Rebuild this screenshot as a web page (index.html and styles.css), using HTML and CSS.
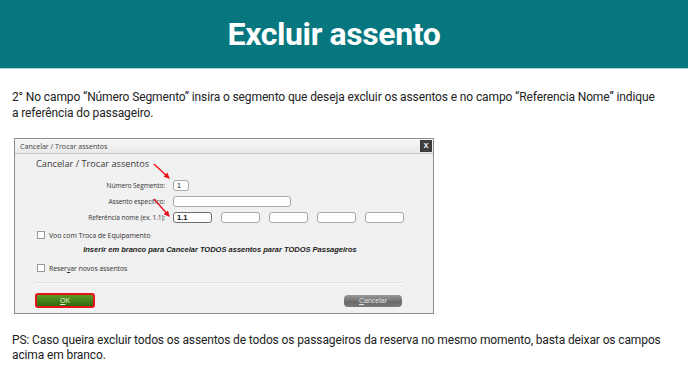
FILE: index.html
```html
<!DOCTYPE html>
<html lang="pt">
<head>
    <meta charset="UTF-8">
    <title>Excluir assento</title>
    <link rel="stylesheet" href="styles.css">
</head>
<body>
    <header class="banner">
        <h1>Excluir assento</h1>
    </header>

    <p class="text intro">2° No campo “Número Segmento” insira o segmento que deseja excluir os assentos e no campo “Referencia Nome” indique a referência do passageiro.</p>

    <div class="dialog">
        <div class="titlebar">
            <span>Cancelar / Trocar assentos</span>
            <span class="close">x</span>
        </div>
        <div class="dlg-body">
            <h2>Cancelar / Trocar assentos</h2>

            <div class="row first">
                <label>Número Segmento:</label>
                <span class="field seg">1</span>
            </div>
            <div class="row">
                <label>Assento específico:</label>
                <span class="field seat"></span>
            </div>
            <div class="row">
                <label>Referência nome (ex. 1.1):</label>
                <div class="refs">
                    <span class="field ref active">1.1</span>
                    <span class="field ref"></span>
                    <span class="field ref"></span>
                    <span class="field ref"></span>
                    <span class="field ref"></span>
                </div>
            </div>

            <div class="check first-check"><span class="box"></span>Voo com Troca de Equipamento</div>
            <div class="notice">Inserir em branco para Cancelar TODOS assentos parar TODOS Passageiros</div>
            <div class="check"><span class="box"></span>Reser<u>v</u>ar novos assentos</div>

            <div class="sep"></div>

            <div class="actions">
                <span class="btn ok"><span><u>O</u>K</span></span>
                <span class="btn cancel"><u>C</u>ancelar</span>
            </div>
        </div>

        <svg class="arrows" width="420" height="176" viewBox="0 0 420 176">
            <defs>
                <marker id="head" markerWidth="6" markerHeight="6" refX="5" refY="3" orient="auto" markerUnits="userSpaceOnUse">
                    <path d="M0,0 L6,3 L0,6 z" fill="#e8121b"/>
                </marker>
            </defs>
            <line x1="140" y1="26" x2="155" y2="40" stroke="#e8121b" stroke-width="1.4" marker-end="url(#head)"/>
            <line x1="140" y1="61" x2="155" y2="78" stroke="#e8121b" stroke-width="1.4" marker-end="url(#head)"/>
        </svg>
    </div>

    <p class="text ps">PS: Caso queira excluir todos os assentos de todos os passageiros da reserva no mesmo momento, basta deixar os campos acima em branco.</p>
</body>
</html>
```

FILE: styles.css
```css
body {
    margin: 0;
    background: #fff;
    font-family: Roboto, "Liberation Sans", sans-serif;
}
.banner {
    height: 68px;
    padding-right: 20px;
    background-color: #07777f;
    border-bottom: 1px solid #a9d2d5;
    display: flex;
    justify-content: center;
    align-items: center;
}
.banner h1 {
    margin: 0;
    color: #fff;
    font-size: 32px;
    font-weight: 700;
    letter-spacing: -0.4px;
}
.text {
    margin: 0 0 0 12px;
    font-size: 12px;
    line-height: 16px;
    letter-spacing: -0.12px;
    color: #222;
}
.intro {
    width: 645px;
    margin-top: 20px;
}
.ps {
    width: 652px;
    margin-top: 19px;
    line-height: 15px;
}
.dialog {
    position: relative;
    margin: 17px 0 0 14px;
    width: 418px;
    height: 174px;
    border: 1px solid #8e8e8e;
    background: #f1f1f1;
    font-family: "Open Sans", "DejaVu Sans", sans-serif;
    color: #333;
}
.titlebar {
    height: 14px;
    border-bottom: 1px solid #c9c9c9;
    background: linear-gradient(#f7f7f7, #e9e9e9);
    display: flex;
    align-items: center;
    justify-content: space-between;
    padding: 0 1px 0 5px;
    font-size: 7.1px;
    color: #444;
}
.close {
    width: 12px;
    height: 12px;
    background: #3d3d3d;
    color: #eee;
    font-size: 9px;
    font-weight: 700;
    line-height: 11px;
    text-align: center;
    font-family: "Liberation Sans", sans-serif;
}
.dlg-body {
    padding: 4px 30px 0 20px;
}
.dlg-body h2 {
    margin: 0 0 0 1px;
    height: 12px;
    font-size: 9.2px;
    line-height: 12px;
    font-weight: 400;
    color: #3a3a3a;
}
.row {
    display: flex;
    align-items: center;
    height: 12px;
    margin-top: 4px;
}
.row.first {
    margin-top: 9px;
}
.row label {
    flex-shrink: 0;
    width: 138px;
    padding-right: 8px;
    box-sizing: border-box;
    text-align: right;
    font-size: 6.6px;
    letter-spacing: -0.1px;
    color: #333;
}
.field {
    display: block;
    flex-shrink: 0;
    box-sizing: border-box;
    height: 11px;
    border: 1px solid #a9a9a9;
    border-radius: 3px;
    background: #fff;
    font-family: "Liberation Sans", sans-serif;
    font-size: 7px;
    line-height: 9px;
    padding-left: 3px;
    color: #111;
}
.seg {
    width: 16px;
}
.seat {
    width: 118px;
}
.refs {
    display: flex;
    gap: 9px;
}
.ref {
    width: 39px;
}
.ref.active {
    border-color: #6d6d6d;
    font-weight: 700;
    font-size: 7.5px;
}
.check {
    display: flex;
    align-items: center;
    height: 12px;
    margin-top: 6px;
    padding-left: 2px;
    font-size: 7px;
    letter-spacing: -0.1px;
    color: #333;
}
.first-check {
    margin-top: 6px;
}
.box {
    width: 6px;
    height: 6px;
    border: 1px solid #9a9a9a;
    background: #fff;
    margin-right: 4px;
}
.notice {
    margin-top: 3px;
    height: 12px;
    line-height: 12px;
    text-align: center;
    padding-left: 2px;
    font-family: "Liberation Sans", sans-serif;
    font-size: 7.5px;
    font-weight: 700;
    font-style: italic;
    color: #222;
}
.sep {
    margin-top: 8px;
    height: 1px;
    background: #dedede;
    border-bottom: 1px solid #fafafa;
}
.actions {
    display: flex;
    justify-content: space-between;
    align-items: center;
    margin-top: 9px;
    height: 15px;
}
.btn {
    display: flex;
    justify-content: center;
    align-items: center;
    font-family: "Liberation Sans", sans-serif;
    font-size: 7px;
}
.ok {
    width: 56px;
    height: 11px;
    border: 2px solid #e8121b;
    border-radius: 3px;
    background: linear-gradient(#5c9a25, #2f6a0d);
    color: #e8f3da;
}
.cancel {
    width: 58px;
    height: 12px;
    margin-right: 1px;
    border-radius: 4px;
    background: linear-gradient(#9a9a9a, #6a6a6a 60%, #7a7a7a);
    color: #e4e4e4;
}
.arrows {
    position: absolute;
    left: -1px;
    top: -1px;
    pointer-events: none;
}
```
